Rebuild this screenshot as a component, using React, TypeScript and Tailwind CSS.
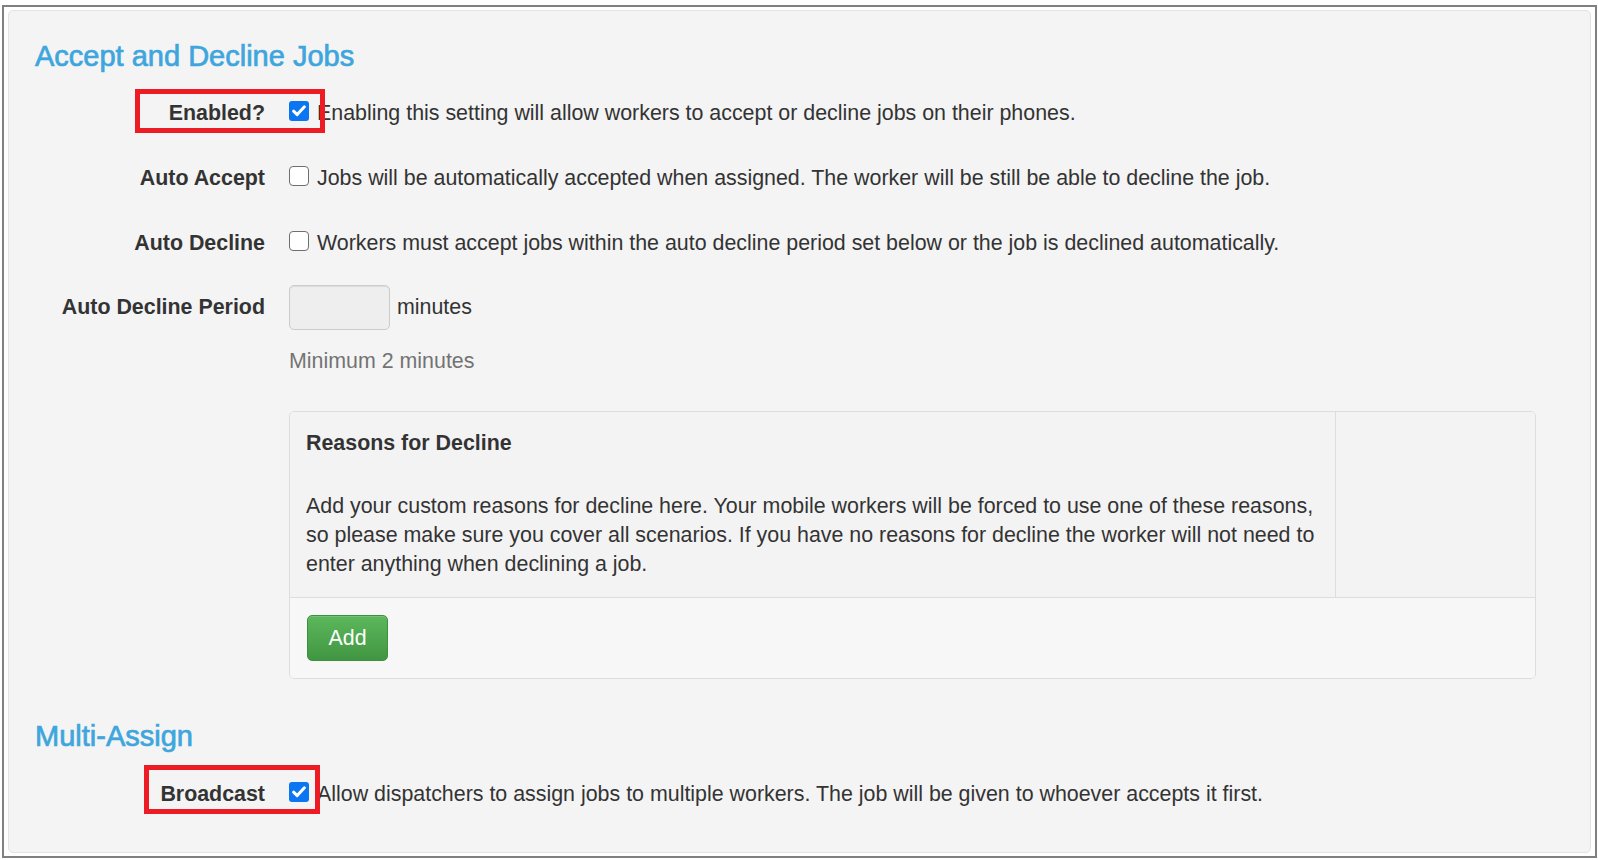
import React from 'react';

function Box({ checked }: { checked?: boolean }) {
  if (checked) {
    return (
      <span className="block w-[20px] h-[20px] rounded-[3px] bg-[#0b75f2]">
        <svg width="20" height="20" viewBox="0 0 20 20" fill="none" className="block">
          <path d="M4.6 10.2 L8.2 13.6 L15.4 5.8" stroke="#ffffff" strokeWidth="3" strokeLinecap="round" strokeLinejoin="round" />
        </svg>
      </span>
    );
  }
  return <span className="block w-[20px] h-[20px] rounded-[4px] bg-white border-[1.5px] border-[#6f6f6f]" />;
}

function CheckRow({ label, text, checked, className }: { label: string; text: string; checked?: boolean; className: string }) {
  return (
    <div className={`flex items-start h-[29px] ${className}`}>
      <div className="w-[230px] shrink-0 text-right font-bold">{label}</div>
      <div className="ml-[24px] flex items-start">
        <div className="mt-[2px] shrink-0">
          <Box checked={checked} />
        </div>
        <span className="ml-[8px] whitespace-nowrap">{text}</span>
      </div>
    </div>
  );
}

export default function App() {
  return (
    <div className="relative w-[1598px] h-[860px] bg-white pt-[5px] pl-[2px] font-['Liberation_Sans',Arial,sans-serif] text-[21.4px] leading-[29px] text-[#333333]">
      <div className="w-[1595px] h-[853px] border-2 border-[#808080] px-[4px] py-[3px]">
        <div className="h-full border border-[#e3e3e3] rounded-[5px] bg-[#f4f4f4] pt-[29px] px-[26px]">
          <h2 className="text-[29px] leading-[32px] text-[#3ea6dd] [-webkit-text-stroke:0.7px]">Accept and Decline Jobs</h2>

          <CheckRow
            className="mt-[26.5px]"
            label="Enabled?"
            checked
            text="Enabling this setting will allow workers to accept or decline jobs on their phones."
          />
          <CheckRow
            className="mt-[36.5px]"
            label="Auto Accept"
            text="Jobs will be automatically accepted when assigned. The worker will be still be able to decline the job."
          />
          <CheckRow
            className="mt-[36px]"
            label="Auto Decline"
            text="Workers must accept jobs within the auto decline period set below or the job is declined automatically."
          />

          {/* period input */}
          <div className="flex items-center mt-[27px]">
            <div className="w-[230px] shrink-0 text-right font-bold">Auto Decline Period</div>
            <div className="ml-[24px] flex items-center">
              <div className="w-[101px] h-[45px] rounded-[5px] border border-[#cccccc] bg-[#eeeeee] shadow-[inset_0_1px_1px_rgba(0,0,0,0.075)]" />
              <span className="ml-[7px]">minutes</span>
            </div>
          </div>
          <div className="ml-[254px] mt-[17px] text-[#737373]">Minimum 2 minutes</div>

          {/* reasons panel */}
          <div className="ml-[254px] mt-[35px] w-[1247px] border border-[#dddddd] rounded-[5px] overflow-hidden">
            <div className="flex bg-[#f3f3f3] border-b border-[#dddddd]">
              <div className="w-[1046px] border-r border-[#dddddd] pt-[17px] pl-[16px] pb-[18px]">
                <div className="font-bold">Reasons for Decline</div>
                <p className="mt-[33.5px] whitespace-nowrap">
                  Add your custom reasons for decline here. Your mobile workers will be forced to use one of these reasons,
                  <br />
                  so please make sure you cover all scenarios. If you have no reasons for decline the worker will not need to
                  <br />
                  enter anything when declining a job.
                </p>
              </div>
              <div className="flex-1" />
            </div>
            <div className="bg-[#f7f7f7] pt-[17px] px-[17px] pb-[17px]">
              <button className="w-[81px] h-[46px] rounded-[5px] border border-[#3e8f3e] bg-gradient-to-b from-[#5cb85c] to-[#419641] text-white flex items-center justify-center pt-[2px] shadow-[inset_0_1px_0_rgba(255,255,255,0.15)]">
                Add
              </button>
            </div>
          </div>

          <h2 className="mt-[41px] text-[29px] leading-[32px] text-[#3ea6dd] [-webkit-text-stroke:0.7px]">Multi-Assign</h2>
          <CheckRow
            className="mt-[28px]"
            label="Broadcast"
            checked
            text="Allow dispatchers to assign jobs to multiple workers. The job will be given to whoever accepts it first."
          />
        </div>
      </div>

      {/* red annotation boxes */}
      <div className="absolute left-[135px] top-[89px] w-[190px] h-[44px] border-[5px] border-[#ed1c24]" />
      <div className="absolute left-[144px] top-[765px] w-[176px] h-[49px] border-[5px] border-[#ed1c24]" />
    </div>
  );
}
